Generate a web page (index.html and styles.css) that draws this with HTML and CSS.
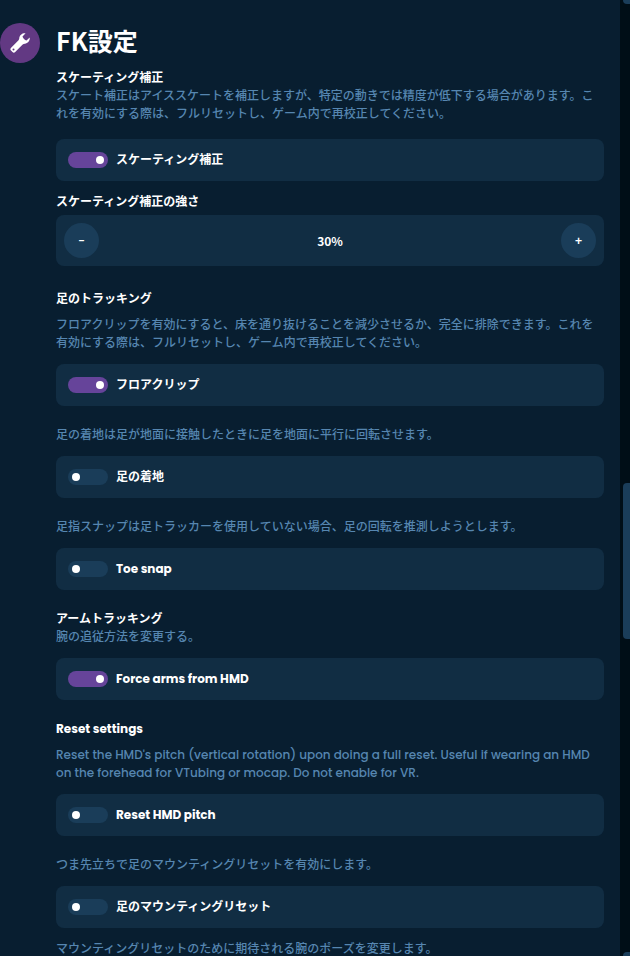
FILE: index.html
```html
<!DOCTYPE html>
<html lang="ja">
<head>
<meta charset="UTF-8">
<meta name="viewport" content="width=device-width, initial-scale=1.0">
<title>FK設定</title>
<link rel="stylesheet" href="styles.css">
</head>
<body>
<div class="page">
    <main class="settings">
        <div class="icon">
            <svg viewBox="0 0 20 20" width="20" height="20" aria-hidden="true">
                <path fill="#fff" fill-rule="evenodd" d="M15.6 0.3C12.5 -0.2 9.6 2 9.3 5.1C9.2 6 9 6.9 8.3 7.6L1.1 14.8A1.9 1.9 0 0 0 1 17.5L2.5 19A1.9 1.9 0 0 0 5.2 18.9L12.4 11.7C13.1 11 14 10.8 14.9 10.7C18 10.4 20.2 7.5 19.7 4.4L16.5 7.5C14.8 7.1 12.9 5.2 12.5 3.5ZM3.5 15.5A1 1 0 1 1 3.5 17.5A1 1 0 1 1 3.5 15.5Z"/>
            </svg>
        </div>
        <div class="content">
            <h1>FK設定</h1>

            <section>
                <h2>スケーティング補正</h2>
                <p>スケート補正はアイススケートを補正しますが、特定の動きでは精度が低下する場合があります。これを有効にする際は、フルリセットし、ゲーム内で再校正してください。</p>
                <label class="card spaced"><input type="checkbox" class="toggle" checked>スケーティング補正</label>
                <h2 class="stepper-title" id="strength">スケーティング補正の強さ</h2>
                <div class="stepper" role="group" aria-labelledby="strength">
                    <button type="button">-</button>
                    <span>30%</span>
                    <button type="button">+</button>
                </div>
            </section>

            <section>
                <h2 class="gap">足のトラッキング</h2>
                <p>フロアクリップを有効にすると、床を通り抜けることを減少させるか、完全に排除できます。これを有効にする際は、フルリセットし、ゲーム内で再校正してください。</p>
                <label class="card"><input type="checkbox" class="toggle" checked>フロアクリップ</label>
                <p>足の着地は足が地面に接触したときに足を地面に平行に回転させます。</p>
                <label class="card"><input type="checkbox" class="toggle">足の着地</label>
                <p>足指スナップは足トラッカーを使用していない場合、足の回転を推測しようとします。</p>
                <label class="card"><input type="checkbox" class="toggle">Toe snap</label>
            </section>

            <section>
                <h2>アームトラッキング</h2>
                <p>腕の追従方法を変更する。</p>
                <label class="card"><input type="checkbox" class="toggle" checked>Force arms from HMD</label>
            </section>

            <section>
                <h2 class="gap">Reset settings</h2>
                <p>Reset the HMD's pitch (vertical rotation) upon doing a full reset. Useful if wearing an HMD on the forehead for VTubing or mocap. Do not enable for VR.</p>
                <label class="card"><input type="checkbox" class="toggle">Reset HMD pitch</label>
                <p>つま先立ちで足のマウンティングリセットを有効にします。</p>
                <label class="card tight"><input type="checkbox" class="toggle">足のマウンティングリセット</label>
                <p>マウンティングリセットのために期待される腕のポーズを変更します。</p>
            </section>
        </div>
    </main>
    <div class="scrollbar">
        <span class="cap-top"></span>
        <span class="thumb"></span>
        <span class="cap-bottom"></span>
    </div>
</div>
</body>
</html>
```

FILE: styles.css
```css
* {
    box-sizing: border-box;
}

body {
    margin: 0;
    background: #081e30;
    color: #fff;
    font-family: Poppins, "Noto Sans CJK JP", sans-serif;
    font-size: 12px;
    line-height: 18px;
}

.page {
    display: flex;
    height: 100vh;
}

.settings {
    flex: 1;
    display: flex;
    align-items: flex-start;
    gap: 16px;
    padding: 23px 16px 0 0;
    overflow-y: auto;
    scrollbar-width: none;
}

.icon {
    display: flex;
    flex: none;
    align-items: center;
    justify-content: center;
    width: 40px;
    height: 40px;
    border-radius: 50%;
    background: #623983;
}

.content {
    flex: 1;
}

h1,
h2,
p {
    margin: 0;
}

h1 {
    margin-bottom: 12px;
    font-family: "Noto Sans CJK JP", sans-serif;
    font-size: 25px;
    line-height: 34px;
}

h2 {
    font-size: 12px;
}

h2.gap {
    margin-bottom: 8px;
}

section + section {
    margin-top: 20px;
}

p {
    color: #5686b0;
    font-weight: 500;
}

.card {
    display: flex;
    align-items: center;
    gap: 8px;
    height: 42px;
    margin-top: 12px;
    padding: 0 12px;
    border-radius: 8px;
    background: #112d43;
    font-weight: 700;
}

.card.spaced {
    margin-top: 16px;
}

.card + p {
    margin-top: 20px;
}

.card.tight + p {
    margin-top: 12px;
}

.toggle {
    appearance: none;
    width: 40px;
    height: 16px;
    margin: 0;
    padding: 4px;
    border-radius: 8px;
    background: #1a3d59;
}

.toggle::before {
    content: "";
    display: block;
    width: 8px;
    height: 8px;
    border-radius: 50%;
    background: #fff;
}

.toggle:checked {
    background: #66449a;
}

.toggle:checked::before {
    margin-left: auto;
}

.stepper-title {
    margin: 12px 0 4px;
}

.stepper {
    display: flex;
    align-items: center;
    justify-content: space-between;
    padding: 8px;
    border-radius: 8px;
    background: #112d43;
    font-weight: 500;
}

section:has(.stepper) {
    margin-bottom: 24px;
}

.stepper span {
    font-family: "Noto Sans CJK JP", sans-serif;
    font-weight: 700;
}

.stepper button {
    width: 35px;
    height: 35px;
    padding: 0;
    border: none;
    border-radius: 50%;
    background: #1a3d59;
    color: #fff;
    font: inherit;
}

.scrollbar {
    display: grid;
    grid-template-rows: 4px 479fr 156fr 313fr 4px;
    flex: none;
    width: 10px;
    padding-left: 3px;
    background: #000e17;
}

.scrollbar span {
    background: #1a3d59;
}

.cap-top {
    grid-row: 1;
    border-bottom-left-radius: 4px;
}

.thumb {
    grid-row: 3;
    border-radius: 4px 0 0 4px;
}

.cap-bottom {
    grid-row: 5;
    border-top-left-radius: 4px;
}
```
